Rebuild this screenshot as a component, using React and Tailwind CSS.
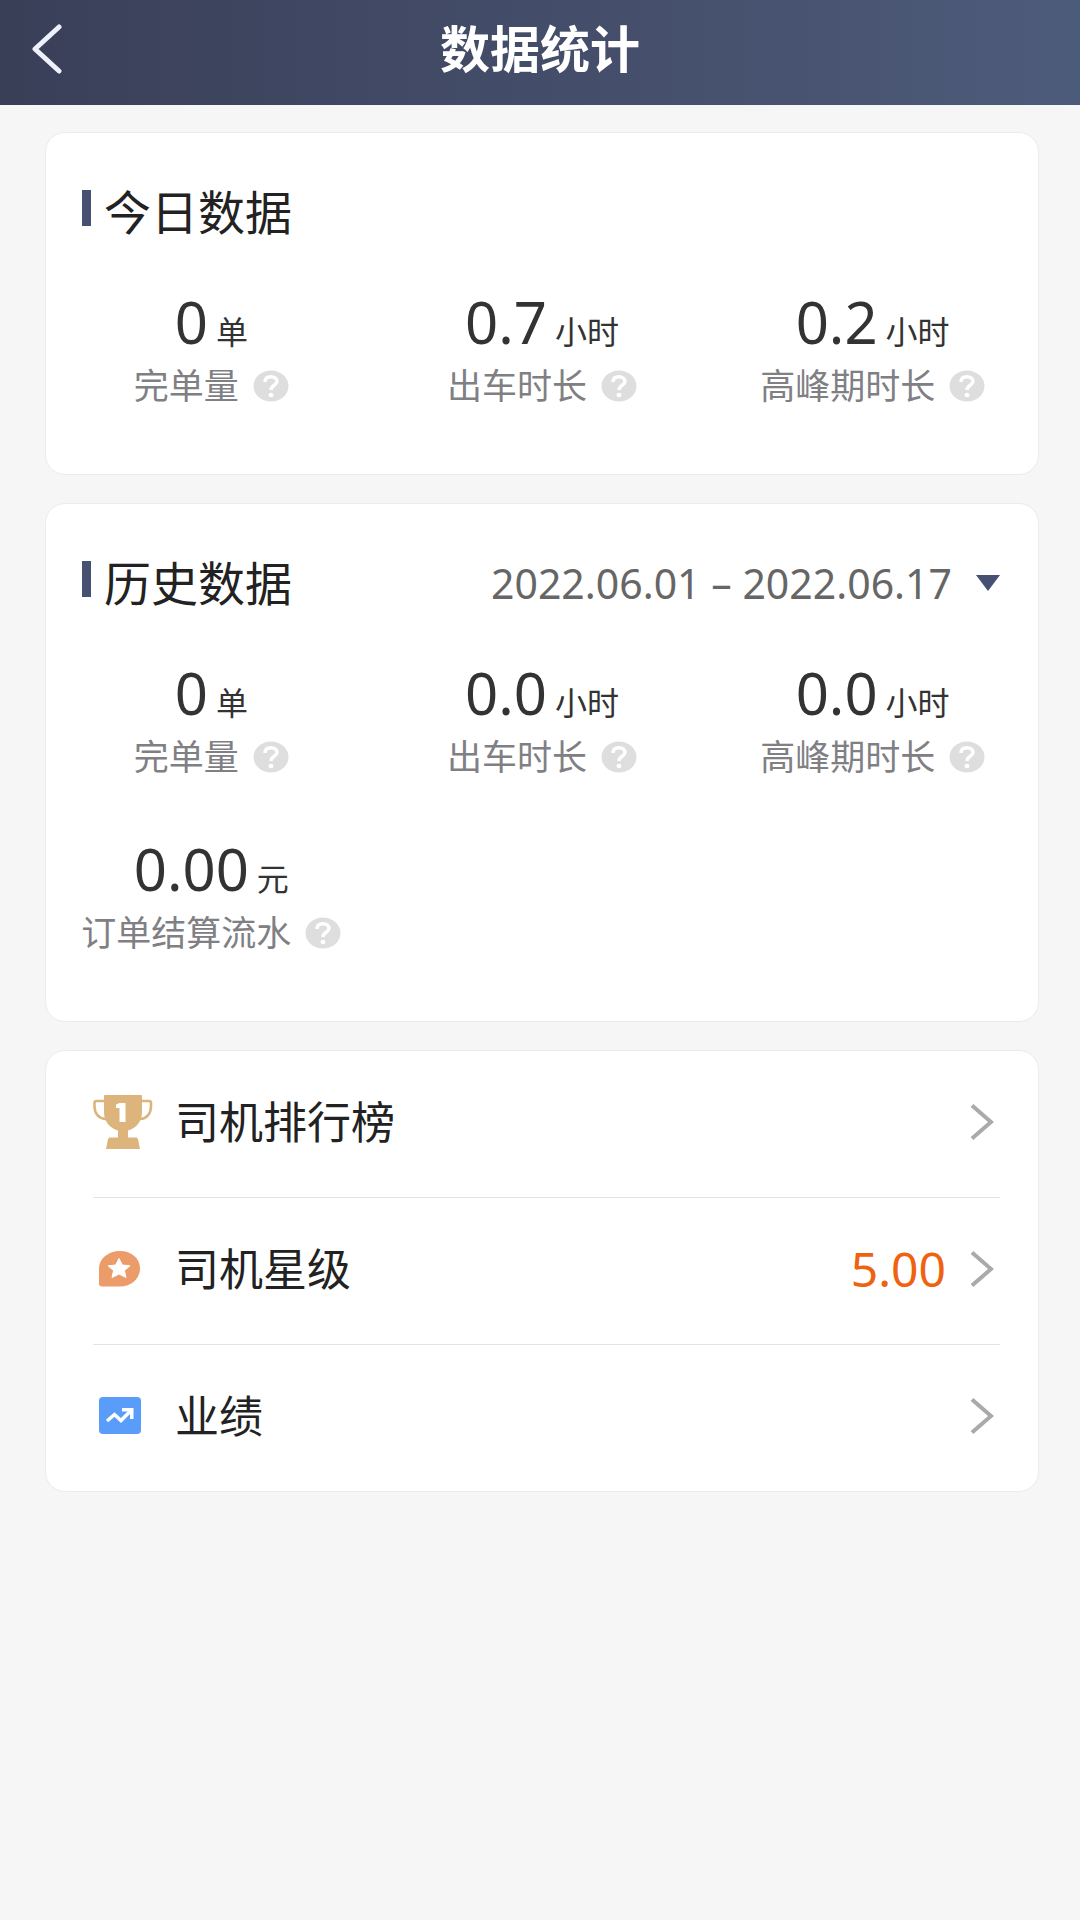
const TODAY = [
  { id: "orders", value: "0", unit: "单", label: "完单量" },
  { id: "online", value: "0.7", unit: "小时", label: "出车时长" },
  { id: "peak", value: "0.2", unit: "小时", label: "高峰期时长" },
];

const HISTORY = [
  { id: "orders", value: "0", unit: "单", label: "完单量" },
  { id: "online", value: "0.0", unit: "小时", label: "出车时长" },
  { id: "peak", value: "0.0", unit: "小时", label: "高峰期时长" },
  { id: "income", value: "0.00", unit: "元", label: "订单结算流水" },
];

const LINKS = [
  { id: "rank", label: "司机排行榜", Icon: TrophyIcon },
  { id: "star", label: "司机星级", Icon: StarIcon, value: "5.00" },
  { id: "performance", label: "业绩", Icon: TrendIcon },
];

function TrophyIcon() {
  return (
    <svg viewBox="0 0 60 56" className="h-14 w-[60px]" aria-hidden="true">
      <path
        d="M11 7H3.500Q1.500 7 1.500 9V12C1.500 20 6 24.500 13 25M49 7H56Q58 7 58 9V12C58 20 53.500 24.500 47 25"
        fill="none"
        stroke="#dcb47c"
        strokeWidth="2.600"
      />
      <path
        d="M12 1H48Q49 1 49 2V18C49 28 43 34 35 36.500V43.500H43Q44.500 43.500 45 45L47 55H13L15 45Q15.500 43.500 17 43.500H25V36.500C17 34 11 28 11 18V2Q11 1 12 1Z"
        fill="#dcb47c"
      />
      <path d="M26.500 9H32.500V28H26.500V14H23V10.500Z" fill="#fff" />
    </svg>
  );
}

function StarIcon() {
  return (
    <svg viewBox="0 0 60 56" className="h-14 w-[60px]" aria-hidden="true">
      <path
        d="M27 10C38.500 10 47 17.500 47 27.500S38.500 45.500 27 45.500H9Q6 45.500 6 42.500V27.500C6 17.500 15.500 10 27 10Z"
        fill="#ec9c68"
      />
      <path
        d="M26 17.500L29.300 24L37 24.800L31.400 29.500L33 36.500L26 33L19 36.500L20.600 29.500L15 24.800L22.700 24Z"
        fill="#fff"
        stroke="#fff"
        strokeLinejoin="round"
      />
    </svg>
  );
}

function TrendIcon() {
  return (
    <svg viewBox="0 0 60 56" className="h-14 w-[60px]" aria-hidden="true">
      <rect x="6" y="9" width="42" height="37" rx="4" fill="#5a9cfa" />
      <path
        d="M14 33L21.500 26.500L28 32.500L38 22.500"
        fill="none"
        stroke="#fff"
        strokeWidth="3.500"
      />
      <path d="M29 20H40.500V31H37V23.500H29Z" fill="#fff" />
    </svg>
  );
}

function HelpIcon() {
  return (
    <svg viewBox="0 0 36 32" className="h-8 w-9" aria-hidden="true">
      <ellipse cx="18" cy="16" rx="17.500" ry="15.500" fill="#dedede" />
      <path
        d="M12 12C12 8.500 14.500 6.800 18 6.800S24 8.700 24 11.500C24 15 18 15.500 18 20"
        fill="none"
        stroke="#fff"
        strokeWidth="3.500"
      />
      <ellipse cx="18" cy="25" rx="2.500" ry="2.200" fill="#fff" />
    </svg>
  );
}

function Card({ className = "", children }) {
  return (
    <section
      className={`rounded-[20px] border border-[#ebebeb] bg-white ${className}`}
    >
      {children}
    </section>
  );
}

function CardHeader({ title, children }) {
  return (
    <div className="flex h-16 items-center justify-between pr-[38px] pl-9">
      <div className="flex items-center gap-[13px]">
        <span className="mb-2 h-9 w-[9px] bg-[#465070]" />
        <h2 className="text-[47px] leading-[64px] text-[#222]">{title}</h2>
      </div>
      {children}
    </div>
  );
}

function Metric({ value, unit, label }) {
  return (
    <div className="flex flex-col items-center">
      <p className="flex items-baseline gap-2 text-[#333]">
        <span className="text-[58px] leading-[76px]">{value}</span>
        <span className="text-[32px] leading-10">{unit}</span>
      </p>
      <div className="flex items-center gap-[14px] text-[#808084]">
        <span className="text-[35px] leading-[52px]">{label}</span>
        <button type="button" aria-label={`${label}说明`}>
          <HelpIcon />
        </button>
      </div>
    </div>
  );
}

function MetricGrid({ metrics }) {
  return (
    <div className="mt-10 grid grid-cols-3 gap-y-12">
      {metrics.map((m) => (
        <Metric key={m.id} value={m.value} unit={m.unit} label={m.label} />
      ))}
    </div>
  );
}

function LinkRow({ label, value, Icon }) {
  return (
    <li className="border-b border-[#e3e3e3] last:border-b-0">
      <a href="#" className="flex h-[146px] items-center pr-[6px] pb-1">
        <Icon />
        <span className="ml-[22px] flex-1 text-[44px] leading-[60px] text-[#222]">
          {label}
        </span>
        {value && (
          <span className="mr-6 text-[48px] leading-[60px] text-[#ee6210]">
            {value}
          </span>
        )}
        <svg viewBox="0 0 24 36" className="h-9 w-6" aria-hidden="true">
          <path
            d="M2 1.500L21 18L2 34.500"
            fill="none"
            stroke="#aaa"
            strokeWidth="4"
          />
        </svg>
      </a>
    </li>
  );
}

export default function App() {
  return (
    <div className="min-h-screen bg-[#f6f6f6] font-['Noto_Sans','Noto_Sans_CJK_SC',sans-serif]">
      <header className="grid h-[105px] grid-cols-[96px_1fr_96px] items-center bg-linear-to-r from-[#3a3f58] to-[#4d5b7a] pb-2">
        <button type="button" aria-label="返回" className="pl-[30px]">
          <svg viewBox="0 0 34 50" className="h-[50px] w-[34px]" aria-hidden="true">
            <path
              d="M29 3L5 25L29 47"
              fill="none"
              stroke="#eef0fa"
              strokeWidth="5"
              strokeLinecap="round"
              strokeLinejoin="round"
            />
          </svg>
        </button>
        <h1 className="text-center text-[50px] leading-[64px] font-bold text-white">
          数据统计
        </h1>
      </header>

      <main className="flex flex-col gap-7 pt-[27px] pr-[41px] pb-12 pl-[45px]">
        <Card className="pt-[47px] pb-[62px]">
          <CardHeader title="今日数据" />
          <MetricGrid metrics={TODAY} />
        </Card>

        <Card className="pt-[47px] pb-[62px]">
          <CardHeader title="历史数据">
            <button
              type="button"
              className="flex items-center gap-6 text-[41px] leading-[52px] text-[#666]"
            >
              2022.06.01 – 2022.06.17
              <svg viewBox="0 0 24 16" className="h-4 w-6" aria-hidden="true">
                <path d="M0 0H24L12 16Z" fill="#465070" />
              </svg>
            </button>
          </CardHeader>
          <MetricGrid metrics={HISTORY} />
        </Card>

        <Card>
          <ul className="pr-[38px] pl-[47px]">
            {LINKS.map((link) => (
              <LinkRow
                key={link.id}
                label={link.label}
                value={link.value}
                Icon={link.Icon}
              />
            ))}
          </ul>
        </Card>
      </main>
    </div>
  );
}
